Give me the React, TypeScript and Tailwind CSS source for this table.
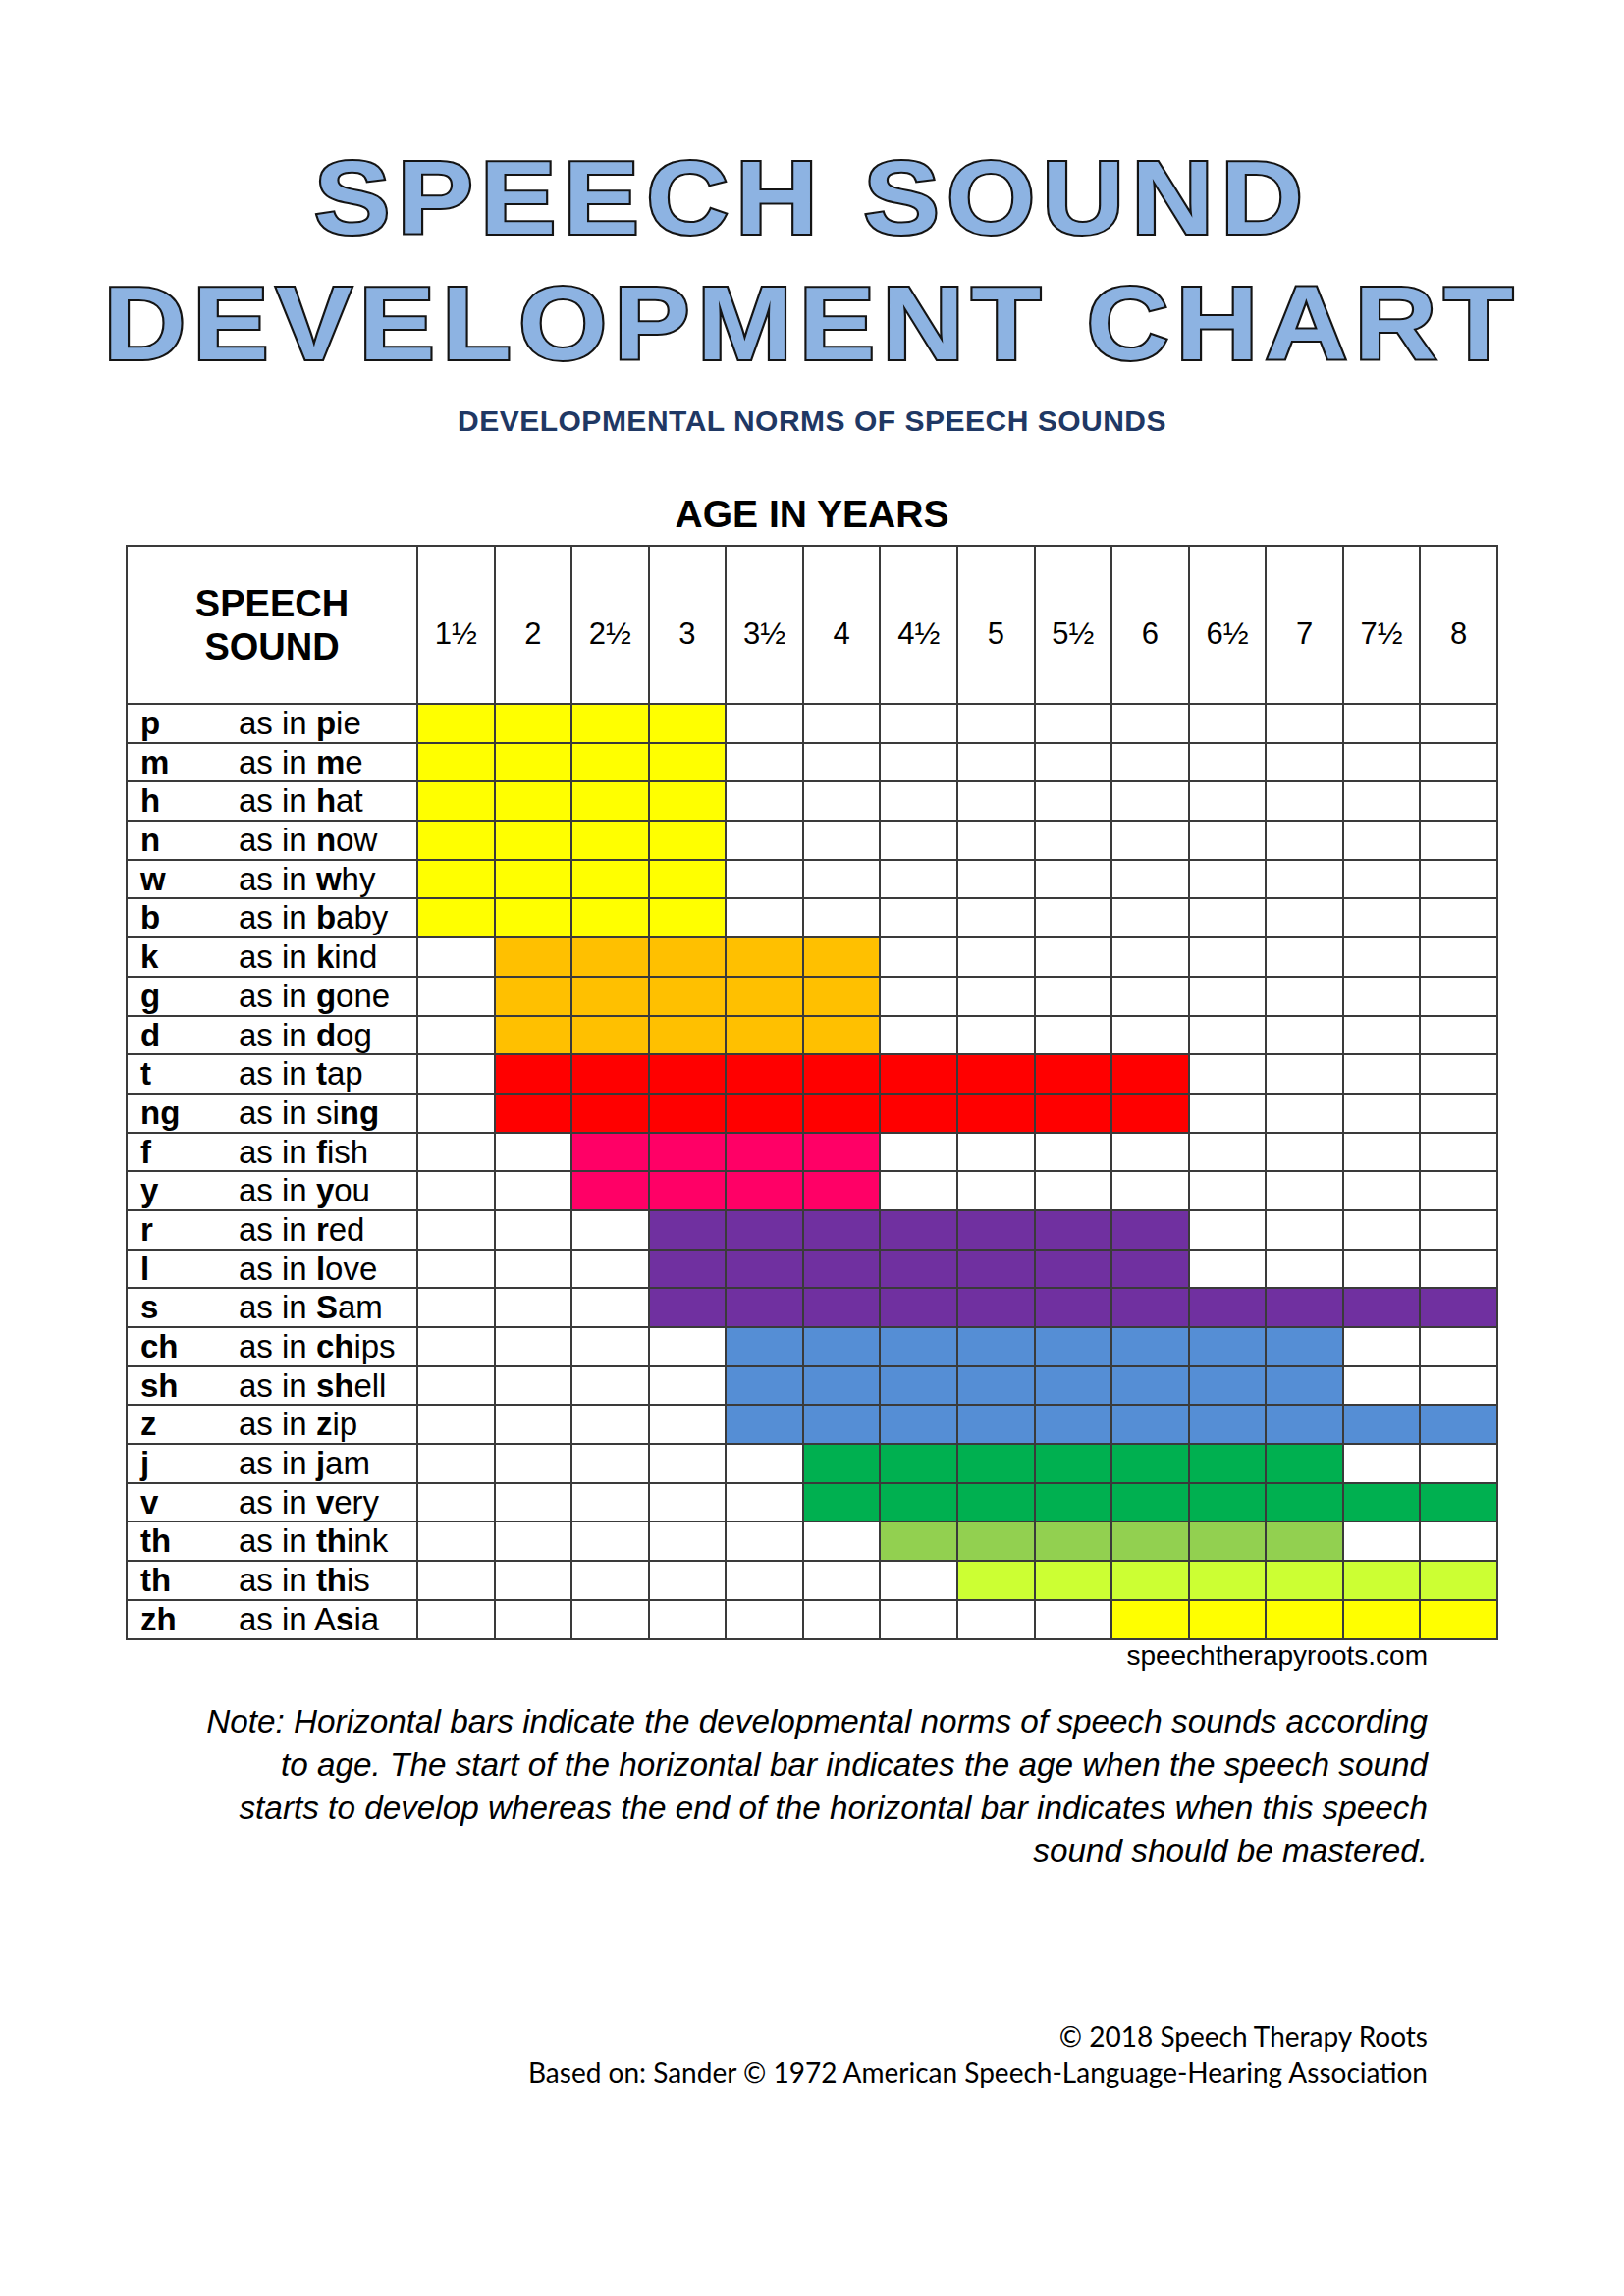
const AGES = ['1½', '2', '2½', '3', '3½', '4', '4½', '5', '5½', '6', '6½', '7', '7½', '8'];

type Row = {
  sound: string;
  pre: string;
  bold: string;
  post: string;
  from: number;
  to: number;
  color: string;
};

const YELLOW = 'bg-[#ffff00]';
const ORANGE = 'bg-[#ffc000]';
const RED = 'bg-[#ff0000]';
const PINK = 'bg-[#ff0066]';
const PURPLE = 'bg-[#7030a0]';
const BLUE = 'bg-[#558ed5]';
const GREEN = 'bg-[#00b050]';
const LIME = 'bg-[#92d050]';
const CHARTREUSE = 'bg-[#ccff33]';

const rows: Row[] = [
  { sound: 'p', pre: '', bold: 'p', post: 'ie', from: 0, to: 3, color: YELLOW },
  { sound: 'm', pre: '', bold: 'm', post: 'e', from: 0, to: 3, color: YELLOW },
  { sound: 'h', pre: '', bold: 'h', post: 'at', from: 0, to: 3, color: YELLOW },
  { sound: 'n', pre: '', bold: 'n', post: 'ow', from: 0, to: 3, color: YELLOW },
  { sound: 'w', pre: '', bold: 'w', post: 'hy', from: 0, to: 3, color: YELLOW },
  { sound: 'b', pre: '', bold: 'b', post: 'aby', from: 0, to: 3, color: YELLOW },
  { sound: 'k', pre: '', bold: 'k', post: 'ind', from: 1, to: 5, color: ORANGE },
  { sound: 'g', pre: '', bold: 'g', post: 'one', from: 1, to: 5, color: ORANGE },
  { sound: 'd', pre: '', bold: 'd', post: 'og', from: 1, to: 5, color: ORANGE },
  { sound: 't', pre: '', bold: 't', post: 'ap', from: 1, to: 9, color: RED },
  { sound: 'ng', pre: 'si', bold: 'ng', post: '', from: 1, to: 9, color: RED },
  { sound: 'f', pre: '', bold: 'f', post: 'ish', from: 2, to: 5, color: PINK },
  { sound: 'y', pre: '', bold: 'y', post: 'ou', from: 2, to: 5, color: PINK },
  { sound: 'r', pre: '', bold: 'r', post: 'ed', from: 3, to: 9, color: PURPLE },
  { sound: 'l', pre: '', bold: 'l', post: 'ove', from: 3, to: 9, color: PURPLE },
  { sound: 's', pre: '', bold: 'S', post: 'am', from: 3, to: 13, color: PURPLE },
  { sound: 'ch', pre: '', bold: 'ch', post: 'ips', from: 4, to: 11, color: BLUE },
  { sound: 'sh', pre: '', bold: 'sh', post: 'ell', from: 4, to: 11, color: BLUE },
  { sound: 'z', pre: '', bold: 'z', post: 'ip', from: 4, to: 13, color: BLUE },
  { sound: 'j', pre: '', bold: 'j', post: 'am', from: 5, to: 11, color: GREEN },
  { sound: 'v', pre: '', bold: 'v', post: 'ery', from: 5, to: 13, color: GREEN },
  { sound: 'th', pre: '', bold: 'th', post: 'ink', from: 6, to: 11, color: LIME },
  { sound: 'th', pre: '', bold: 'th', post: 'is', from: 7, to: 13, color: CHARTREUSE },
  { sound: 'zh', pre: 'A', bold: 's', post: 'ia', from: 9, to: 13, color: YELLOW },
];

function Chart() {
  return (
    <div className="mx-auto mt-[9px] grid w-[1398px] grid-cols-[294px_repeat(14,minmax(0,1fr))] gap-[2px] bg-[#3a3a3a] p-[2px]">
      {/* header */}
      <div className="flex h-[159px] flex-col items-center justify-center bg-white text-[38px] font-bold leading-[44px] text-black">
        <span>SPEECH</span>
        <span>SOUND</span>
      </div>
      {AGES.map((age) => (
        <div key={age} className="flex h-[159px] items-center justify-center bg-white pt-[20px] text-[31px] text-black">
          {age}
        </div>
      ))}

      {/* rows */}
      {rows.map((row, i) => (
        <div key={i} className="contents">
          <div className="flex h-[37.7px] items-center bg-white pl-[13px] text-[33px] leading-[37.7px] text-black">
            <span className="w-[100px] font-bold">{row.sound}</span>
            <span>
              as in {row.pre}
              <b>{row.bold}</b>
              {row.post}
            </span>
          </div>
          {AGES.map((age, c) => (
            <div
              key={age}
              className={`h-[37.7px] ${c >= row.from && c <= row.to ? row.color : 'bg-white'}`}
            />
          ))}
        </div>
      ))}
    </div>
  );
}

export default function App() {
  return (
    <div className="min-h-[2339px] w-[1654px] bg-white font-['Liberation_Sans',Arial,sans-serif] text-black">
      {/* title */}
      <h1 className="flex flex-col items-center pt-[137px] text-[106px] font-bold leading-[128px] tracking-[6.5px] text-[#8db3e2] [-webkit-text-stroke:4px_#141414] [paint-order:stroke_fill]">
        <span className="inline-block scale-x-[1.095]">SPEECH SOUND</span>
        <span className="inline-block scale-x-[1.095]">DEVELOPMENT CHART</span>
      </h1>

      <p className="mt-[18px] text-center text-[30px] font-bold leading-[36px] tracking-[0.5px] text-[#1f3864]">
        DEVELOPMENTAL NORMS OF SPEECH SOUNDS
      </p>

      <p className="mt-[55px] text-center text-[39px] font-bold leading-[44px]">AGE IN YEARS</p>

      <Chart />

      <div className="mx-auto w-[1398px] pr-[72px] text-right">
        <p className="text-[28px] leading-[32px]">speechtherapyroots.com</p>

        <p className="mt-[29px] text-[33.3px] italic leading-[44px]">
          Note: Horizontal bars indicate the developmental norms of speech sounds according
          <br />
          to age. The start of the horizontal bar indicates the age when the speech sound
          <br />
          starts to develop whereas the end of the horizontal bar indicates when this speech
          <br />
          sound should be mastered.
        </p>

        <div className="mt-[148px] font-['Lato','Open_Sans',sans-serif] text-[28px] leading-[37px]">
          <p>© 2018 Speech Therapy Roots</p>
          <p>Based on: Sander © 1972 American Speech-Language-Hearing Association</p>
        </div>
      </div>
    </div>
  );
}
